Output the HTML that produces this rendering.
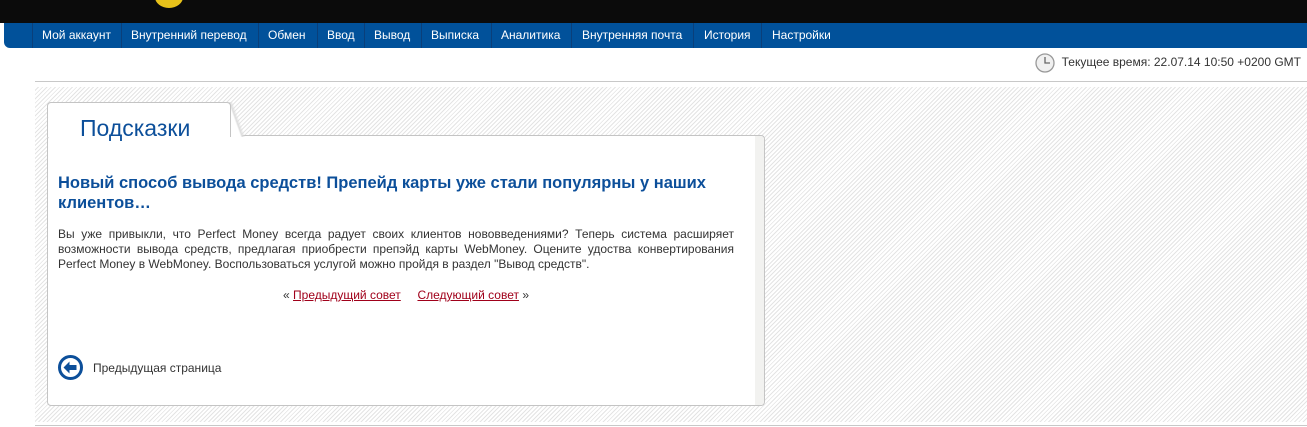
<!DOCTYPE html>
<html><head><meta charset="utf-8"><style>
*{margin:0;padding:0;box-sizing:border-box}
body{width:1307px;height:427px;background:#fff;font-family:"Liberation Sans",Arial,sans-serif;position:relative;overflow:hidden}
.top{position:absolute;left:0;top:0;width:1307px;height:23px;background:#0b0b0b}
.coin{position:absolute;left:155px;top:-14px;width:28px;height:22px;border-radius:50%;background:#e8c21a}
.nav{position:absolute;left:4px;top:23px;width:1303px;height:25px;background:#01519a;border-bottom-left-radius:6px}
.nav span{position:absolute;top:0;height:25px;line-height:25px;color:#fff;font-size:12px;border-left:1px solid #0a3f7a}
.time{position:absolute;right:6px;top:53px;font-size:12px;color:#333;line-height:18px}
.clock{position:absolute;left:1035px;top:53px}
.line{position:absolute;left:35px;width:1272px;height:1px;background:#c8c8c8}
.hatch{position:absolute;left:35px;top:87px;width:1272px;height:335px;background:repeating-linear-gradient(135deg,#fff 0 2px,#e4e4e4 2px 3px)}
.box{position:absolute;left:47px;top:135px;width:718px;height:271px;background:#fff;border:1px solid #c4c4c4;border-radius:4px}
.shade{position:absolute;right:0;top:0;width:9px;height:100%;background:#f2f2f0;border-radius:0 4px 4px 0}
.tab{position:absolute;left:47px;top:102px;width:184px;height:35px;background:#fff;border:1px solid #c4c4c4;border-bottom:none;border-radius:4px 4px 0 0}
.tabsl{position:absolute;left:226px;top:102px;width:20px;height:35px;background:linear-gradient(70deg,#fff 0 45%,#ddd 50%,transparent 60%)}
.tabt{position:absolute;left:80px;top:115px;font-size:23px;color:#0c4f9a}
h1{position:absolute;left:58px;top:173px;width:680px;font-size:16.5px;line-height:20px;color:#0c4f9a;font-weight:bold}
.p{position:absolute;left:58px;top:227px;width:676px;font-size:12px;line-height:15px;color:#333}
.p div{text-align:justify;text-align-last:justify;white-space:nowrap}
.p div.l{text-align-last:left}
.links{position:absolute;left:283px;top:288px;font-size:12px;color:#333}
.links a{color:#a0001a;text-decoration:underline}
.back{position:absolute;left:58px;top:355px}
.backt{position:absolute;left:93px;top:361px;font-size:12px;color:#333}
</style></head><body>
<div class="top"><div class="coin"></div></div>
<div class="nav">
<span style="left:28px;padding-left:9px;width:91px">Мой аккаунт</span>
<span style="left:117px;padding-left:9px;width:138px">Внутренний перевод</span>
<span style="left:254px;padding-left:9px;width:60px">Обмен</span>
<span style="left:313px;padding-left:9px;width:48px">Ввод</span>
<span style="left:360px;padding-left:9px;width:58px">Вывод</span>
<span style="left:417px;padding-left:9px;width:70px">Выписка</span>
<span style="left:487px;padding-left:9px;width:80px">Аналитика</span>
<span style="left:567px;padding-left:10px;width:123px">Внутренняя почта</span>
<span style="left:689px;padding-left:10px;width:68px">История</span>
<span style="left:757px;padding-left:10px;width:80px">Настройки</span>
</div>
<svg class="clock" width="20" height="20" viewBox="0 0 20 20"><circle cx="10" cy="10" r="9" fill="#f0f0f0" stroke="#999" stroke-width="1.3"/><path d="M10 4v6h5" stroke="#666" stroke-width="1.3" fill="none"/></svg>
<div class="time">Текущее время: 22.07.14 10:50 +0200 GMT</div>
<div class="line" style="top:81px"></div>
<div class="hatch"></div>
<div class="line" style="top:425px"></div>
<div class="box"><div class="shade"></div></div>
<div class="tabsl"></div>
<div class="tab"></div>
<div class="tabt">Подсказки</div>
<h1>Новый способ вывода средств! Препейд карты уже стали популярны у наших клиентов…</h1>
<div class="p">
<div>Вы уже привыкли, что Perfect Money всегда радует своих клиентов нововведениями? Теперь система расширяет</div>
<div>возможности вывода средств, предлагая приобрести препэйд карты WebMoney. Оцените удоства конвертирования</div>
<div class="l">Perfect Money в WebMoney. Воспользоваться услугой можно пройдя в раздел "Вывод средств".</div>
</div>
<div class="links">« <a>Предыдущий совет</a> &nbsp;&nbsp;&nbsp; <a>Следующий совет</a> »</div>
<svg class="back" width="25" height="25" viewBox="0 0 25 25"><circle cx="12.5" cy="12.5" r="11" fill="#fff" stroke="#0c4f9a" stroke-width="3"/><path d="M5.5 12.5l6-6v3.5h7v5h-7v3.5z" fill="#0c4f9a"/></svg>
<div class="backt">Предыдущая страница</div>
</body></html>
